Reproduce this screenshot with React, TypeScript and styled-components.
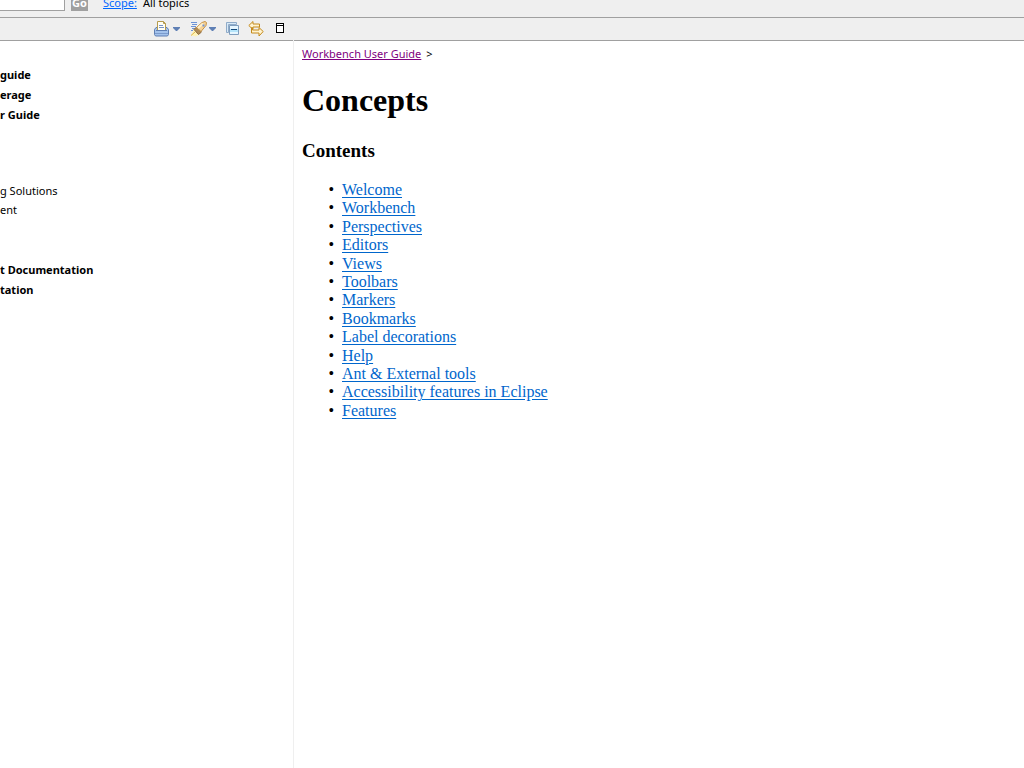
import React from "react";
import styled, { createGlobalStyle, css } from "styled-components";

const uiFont = `"Noto Sans", "Open Sans", sans-serif`;

const GlobalStyle = createGlobalStyle`
  * { box-sizing: border-box; }
  body {
    margin: 0;
    background: #fff;
    color: #000;
    font: 11px/20px ${uiFont};
  }
`;

const Page = styled.div`
  display: flex;
  flex-direction: column;
  min-height: 100vh;
`;

const SearchBar = styled.form`
  display: flex;
  align-items: flex-end;
  height: 18px;
  padding-bottom: 6px;
  overflow: hidden;
  background: #efefef;
  border-bottom: 1px solid #a0a0a0;
`;

const SearchInput = styled.input`
  width: 65px;
  height: 22px;
  border: 1px solid #a0a0a0;
  border-left: 0;
  background: #fff;
  font: inherit;
`;

const GoButton = styled.button`
  width: 17px;
  height: 16px;
  margin: 0 15px 0 6px;
  padding: 0;
  border: 0;
  background: #a0a0a0;
  color: #fff;
  font: bold 11px/16px ${uiFont};
`;

const ScopeLink = styled.a`
  color: #0066ff;
  line-height: 16px;
`;

const ScopeName = styled.span`
  margin-left: 6px;
  line-height: 16px;
`;

const Panels = styled.div`
  display: flex;
  flex: 1;
`;

const Sidebar = styled.aside`
  flex: 0 0 294px;
  border-right: 1px solid #efefef;
`;

const Toolbar = styled.div`
  display: flex;
  align-items: center;
  justify-content: flex-end;
  gap: 8px;
  height: 23px;
  padding-right: 5px;
  background: #efefef;
  border-bottom: 1px solid #a0a0a0;
`;

const ToolButton = styled.button`
  display: flex;
  align-items: center;
  padding: 0;
  border: 0;
  background: none;
`;

const Topics = styled.nav`
  padding-top: 24px;
`;

const TopicGroup = styled.ul<{ $book: boolean }>`
  margin: 0;
  padding: 0;
  list-style: none;
  ${(p) =>
    p.$book
      ? css`
          font-weight: bold;
          line-height: 20px;
        `
      : css`
          margin: 56px 0 41px;
          line-height: 19px;
        `}
`;

const TopicLink = styled.a`
  color: inherit;
  text-decoration: none;
`;

const Main = styled.main`
  flex: 1;
  min-width: 0;
`;

const Article = styled.article`
  padding: 3px 8px;
  font-family: "Liberation Serif", serif;
`;

const Breadcrumb = styled.nav`
  font-family: ${uiFont};
  font-size: 11px;
  line-height: 20px;
`;

const VisitedLink = styled.a`
  margin-right: 2px;
  color: #800080;
  text-underline-offset: 1px;
`;

const Title = styled.h1`
  margin: 17px 0 0;
  font-size: 32px;
  line-height: 38px;
`;

const Subtitle = styled.h2`
  margin: 21px 0 0;
  font-size: 19px;
  line-height: 22px;
`;

const Contents = styled.ul`
  margin: 19px 0 0;
  padding-left: 40px;
  list-style-type: "•\\00a0\\00a0";
  font-size: 16px;
  line-height: 1.15;
`;

const ContentLink = styled.a`
  color: #0066cc;
  text-underline-offset: 2px;
`;

const contents = [
  "Welcome",
  "Workbench",
  "Perspectives",
  "Editors",
  "Views",
  "Toolbars",
  "Markers",
  "Bookmarks",
  "Label decorations",
  "Help",
  "Ant & External tools",
  "Accessibility features in Eclipse",
  "Features",
];

const topicGroups = [
  { book: true, items: ["guide", "erage", "r Guide"] },
  { book: false, items: ["g Solutions", "ent"] },
  { book: true, items: ["t Documentation", "tation"] },
];

const MenuArrow = () => (
  <svg width="7" height="4" viewBox="0 0 7 4" aria-hidden="true">
    <path d="M0 0h7v1L4 4H3L0 1z" fill="#5f80b5" />
  </svg>
);

const PrinterIcon = () => (
  <svg width="20" height="16" viewBox="0 0 20 16" aria-hidden="true">
    <path d="M1.500 8.500L3 6.500h11l1.500 2v5l-1 1.500h-12l-1-1.500z" fill="#a3c2ec" stroke="#5f7fb3" />
    <path d="M2 12.500h13" stroke="#7b9bcc" />
    <path d="M4.500 9.500v-9h6l2 2v7z" fill="#fffef4" stroke="#b59a4e" />
    <path d="M10.500 .5v2h2" fill="none" stroke="#b59a4e" />
    <path d="M6 4.500h4M6 6.500h5" stroke="#7894c8" />
    <path d="M3 9.500h11" stroke="#5f7fb3" />
  </svg>
);

const SearchIcon = () => (
  <svg width="21" height="16" viewBox="0 0 21 16" aria-hidden="true">
    <path d="M3 1.500h6M4 3.500h5M3 5.500h5M4 7.500h3M3 9.500h2" stroke="#6d93d6" />
    <path d="M3 14.500L6 8l6 5-4 2.500z" fill="#fff3b8" />
    <path d="M6 8.500L8.500 6l5 5-3 2.500z" fill="#ad8a58" stroke="#8d6a3c" />
    <path d="M8.500 6.500L14 1.500l3-1 1.500 1L18 4.500l-5 6z" fill="#f7d396" stroke="#c69247" />
    <path d="M10 7l5-4.500" stroke="#fff0cc" strokeWidth="2" />
    <path d="M14.500 3.500h2v2h-2z" fill="#6d93d6" />
    <path d="M3 14.500L7 11" stroke="#e0b64e" />
  </svg>
);

const CollapseIcon = () => (
  <svg width="16" height="16" viewBox="0 0 16 16" aria-hidden="true">
    <path d="M2.500 11.500v-10h10v2h-8v8z" fill="#d8e9f7" stroke="#8fabc8" />
    <path d="M5.500 4.500h9v9h-9z" fill="#e6f6ff" stroke="#7f9dbd" />
    <path d="M6 8h8v3H6z" fill="#b5e5fa" />
    <path d="M7 8.500h6" stroke="#154a7d" />
  </svg>
);

const SyncIcon = () => (
  <svg width="16" height="16" viewBox="0 0 16 16" aria-hidden="true">
    <g fill="#fff3d0" stroke="#c48a1c" strokeLinejoin="round">
      <path d="M.8 4.500L5 .5v2.500h6.500v3H5v2.500z" />
      <path d="M15.200 10.500L11 6.500V9H4.500V6.500h-1v5.500H11v3z" />
    </g>
  </svg>
);

const MaximizeIcon = () => (
  <svg width="16" height="16" viewBox="0 0 16 16" aria-hidden="true" shapeRendering="crispEdges">
    <path d="M4.500 2.500h7v9h-7zM4 4.500h8" fill="#fff" stroke="#000" />
  </svg>
);

export default function App() {
  return (
    <Page>
      <GlobalStyle />
      <SearchBar>
        <SearchInput aria-label="Search" />
        <GoButton type="button">Go</GoButton>
        <ScopeLink href="#scope">Scope:</ScopeLink>
        <ScopeName>All topics</ScopeName>
      </SearchBar>
      <Panels>
        <Sidebar>
          <Toolbar>
            <ToolButton aria-label="Print topics">
              <PrinterIcon />
              <MenuArrow />
            </ToolButton>
            <ToolButton aria-label="Search topics">
              <SearchIcon />
              <MenuArrow />
            </ToolButton>
            <ToolButton aria-label="Collapse all">
              <CollapseIcon />
            </ToolButton>
            <ToolButton aria-label="Link with contents">
              <SyncIcon />
            </ToolButton>
            <ToolButton aria-label="Maximize">
              <MaximizeIcon />
            </ToolButton>
          </Toolbar>
          <Topics aria-label="Topics">
            {topicGroups.map((group) => (
              <TopicGroup key={group.items[0]} $book={group.book}>
                {group.items.map((topic) => (
                  <li key={topic}>
                    <TopicLink href="#topic">{topic}</TopicLink>
                  </li>
                ))}
              </TopicGroup>
            ))}
          </Topics>
        </Sidebar>
        <Main>
          <Toolbar />
          <Article>
            <Breadcrumb aria-label="Breadcrumb">
              <VisitedLink href="#guide">Workbench User Guide</VisitedLink> &gt;
            </Breadcrumb>
            <Title>Concepts</Title>
            <Subtitle>Contents</Subtitle>
            <Contents>
              {contents.map((item) => (
                <li key={item}>
                  <ContentLink href="#topic">{item}</ContentLink>
                </li>
              ))}
            </Contents>
          </Article>
        </Main>
      </Panels>
    </Page>
  );
}
